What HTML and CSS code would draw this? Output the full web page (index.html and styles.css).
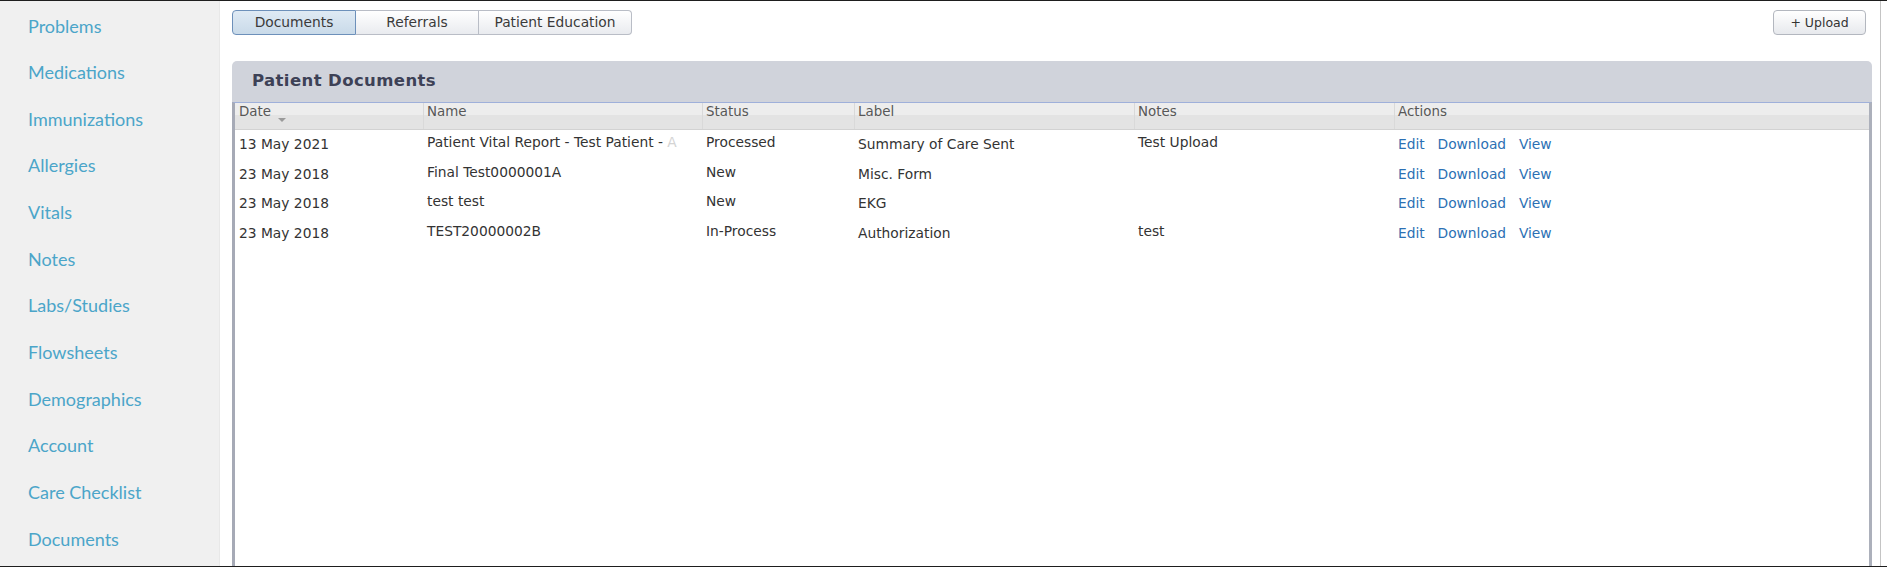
FILE: index.html
```html
<!DOCTYPE html>
<html lang="en">
<head>
<meta charset="utf-8">
<title>Patient Documents</title>
<link rel="stylesheet" href="styles.css">
</head>
<body>
<div class="app">
  <nav class="sidebar">
    <a class="nav-item" href="#">Problems</a>
    <a class="nav-item" href="#">Medications</a>
    <a class="nav-item" href="#">Immunizations</a>
    <a class="nav-item" href="#">Allergies</a>
    <a class="nav-item" href="#">Vitals</a>
    <a class="nav-item" href="#">Notes</a>
    <a class="nav-item" href="#">Labs/Studies</a>
    <a class="nav-item" href="#">Flowsheets</a>
    <a class="nav-item" href="#">Demographics</a>
    <a class="nav-item" href="#">Account</a>
    <a class="nav-item" href="#">Care Checklist</a>
    <a class="nav-item" href="#">Documents</a>
  </nav>
  <main class="main">
    <div class="toolbar">
      <div class="tabs">
        <button class="tab tab-active tab-docs">Documents</button>
        <button class="tab tab-ref">Referrals</button>
        <button class="tab tab-edu">Patient Education</button>
      </div>
      <button class="upload">+ Upload</button>
    </div>
    <section class="panel">
      <header class="panel-head">Patient Documents</header>
      <div class="grid">
        <div class="row head">
          <div class="th first">Date<span class="sort"></span></div>
          <div class="th">Name</div>
          <div class="th">Status</div>
          <div class="th">Label</div>
          <div class="th">Notes</div>
          <div class="th">Actions</div>
        </div>
        <div class="row">
          <div class="td">13 May 2021</div>
          <div class="td hi">Patient Vital Report - Test Patient - <span class="faded">A</span></div>
          <div class="td hi">Processed</div>
          <div class="td">Summary of Care Sent</div>
          <div class="td hi">Test Upload</div>
          <div class="td actions"><a href="#">Edit</a><a href="#">Download</a><a href="#">View</a></div>
        </div>
        <div class="row">
          <div class="td">23 May 2018</div>
          <div class="td hi">Final Test0000001A</div>
          <div class="td hi">New</div>
          <div class="td">Misc. Form</div>
          <div class="td hi"></div>
          <div class="td actions"><a href="#">Edit</a><a href="#">Download</a><a href="#">View</a></div>
        </div>
        <div class="row">
          <div class="td">23 May 2018</div>
          <div class="td hi">test test</div>
          <div class="td hi">New</div>
          <div class="td">EKG</div>
          <div class="td hi"></div>
          <div class="td actions"><a href="#">Edit</a><a href="#">Download</a><a href="#">View</a></div>
        </div>
        <div class="row">
          <div class="td">23 May 2018</div>
          <div class="td hi">TEST20000002B</div>
          <div class="td hi">In-Process</div>
          <div class="td">Authorization</div>
          <div class="td hi">test</div>
          <div class="td actions"><a href="#">Edit</a><a href="#">Download</a><a href="#">View</a></div>
        </div>
      </div>
    </section>
  </main>
  <div class="edge"></div>
</div>
</body>
</html>
```

FILE: styles.css
```css
* { box-sizing: border-box; }
html, body { margin: 0; padding: 0; background: #ffffff; }
body {
  font-family: "DejaVu Sans", Verdana, sans-serif;
  color: #333333;
  width: 1887px;
  height: 567px;
  overflow: hidden;
}
.app {
  display: flex;
  height: 567px;
  border-top: 1px solid #1e1e1e;
  border-bottom: 1px solid #1e1e1e;
  overflow: hidden;
}
.sidebar {
  width: 220px;
  flex: none;
  background: #f0f0f0;
  border-right: 1px solid #e8e8e8;
  padding-top: 1.5px;
  display: flex;
  flex-direction: column;
}
.nav-item {
  display: block;
  height: 46.67px;
  line-height: 46.67px;
  padding-left: 28px;
  font-family: Lato, "Open Sans", sans-serif;
  font-size: 18px;
  color: #4ba5c9;
  text-decoration: none;
}
.main {
  flex: 1;
  min-width: 0;
  display: flex;
  flex-direction: column;
  padding: 9px 8px 0 12px;
  border-right: 1px solid #c4c4c4;
  overflow: hidden;
}
.edge { width: 6px; flex: none; background: #ffffff; }
.toolbar {
  display: flex;
  justify-content: space-between;
  align-items: flex-start;
  padding-right: 6px;
  height: 25px;
}
.tabs { display: flex; }
.tab {
  height: 25px;
  margin: 0;
  font-family: "DejaVu Sans", Verdana, sans-serif;
  font-size: 13.8px;
  color: #3a3a3a;
  background: linear-gradient(#ffffff, #e9ebef);
  border: 1px solid #b9bdc6;
  border-left: none;
  padding: 0;
  line-height: 23px;
}
.tab-docs { width: 124px; border-radius: 4px 0 0 4px; border-left: 1px solid #6d90ba; }
.tab-ref { width: 123px; }
.tab-edu { width: 153px; border-radius: 0 4px 4px 0; }
.tab-active {
  background: linear-gradient(#dfeaf4, #c9dae9);
  border-color: #6d90ba;
  border-right: 1px solid #6d90ba;
}
.upload {
  width: 93px;
  height: 25px;
  margin: 0;
  padding: 0;
  font-family: "DejaVu Sans", Verdana, sans-serif;
  font-size: 12.5px;
  color: #333333;
  background: linear-gradient(#ffffff, #e7e9ed);
  border: 1px solid #b3b7bf;
  border-radius: 4px;
  line-height: 23px;
}
.panel {
  margin-top: 26px;
  flex: 1;
  display: flex;
  flex-direction: column;
  min-height: 0;
}
.panel-head {
  height: 41px;
  background: #d0d3db;
  border-radius: 5px 5px 0 0;
  padding: 10px 0 0 20px;
  font-weight: bold;
  font-size: 16.5px;
  letter-spacing: 0.4px;
  line-height: 20px;
  color: #3d4156;
}
.grid {
  flex: 1;
  background: #ffffff;
  border-top: 1px solid #9fb0da;
  border-left: 3px solid #a6aab6;
  border-right: 3px solid #acb0bb;
}
.row {
  display: grid;
  grid-template-columns: 188px 279px 152px 280px 260px 1fr;
  height: 29.6px;
  font-size: 13.8px;
  line-height: 16px;
}
.row.head {
  height: 27px;
  background: linear-gradient(#ededed 0, #ededed 45%, #e3e3e3 45%, #e3e3e3 100%);
  border-bottom: 1px solid #d2d2d2;
}
.th {
  padding: 1px 3px 0;
  font-size: 13.4px;
  color: #575757;
  border-left: 1px solid #d9d9d9;
  white-space: nowrap;
}
.th.first { border-left: none; padding-left: 4px; }
.sort {
  display: inline-block;
  width: 0;
  height: 0;
  margin-left: 7px;
  border-left: 4px solid transparent;
  border-right: 4px solid transparent;
  border-top: 4px solid #9a9a9a;
  vertical-align: -6px;
}
.td {
  padding: 6px 4px 0;
  white-space: nowrap;
  overflow: hidden;
  color: #333333;
}
.td.hi { padding-top: 4px; }
.faded { color: #d4d4d4; }
.actions a {
  color: #2c70b4;
  text-decoration: none;
  margin-right: 12.8px;
}
```
